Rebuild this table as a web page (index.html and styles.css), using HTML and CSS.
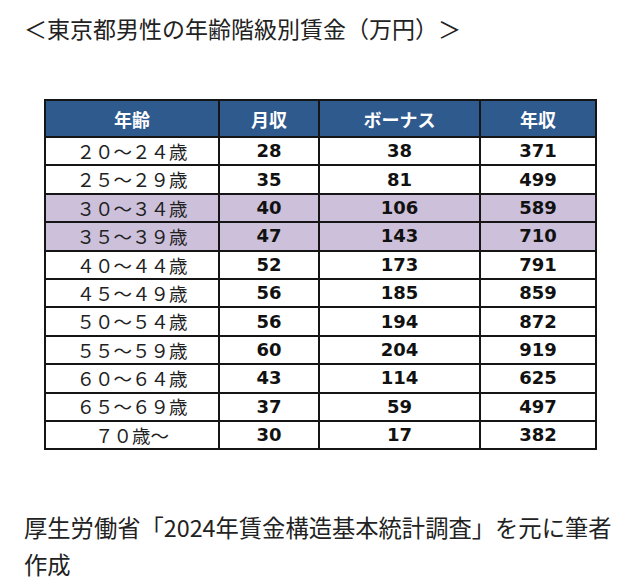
FILE: index.html
```html
<!DOCTYPE html>
<html lang="ja">
<head>
<meta charset="utf-8">
<link rel="stylesheet" href="styles.css">
</head>
<body>
<div class="page">
  <h1 class="title">＜東京都男性の年齢階級別賃金（万円）＞</h1>
  <table class="wage">
    <colgroup>
      <col class="c1"><col class="c2"><col class="c3"><col class="c4">
    </colgroup>
    <thead>
      <tr><th>年齢</th><th>月収</th><th>ボーナス</th><th>年収</th></tr>
    </thead>
    <tbody>
      <tr><td class="age">２０～２４歳</td><td>28</td><td>38</td><td>371</td></tr>
      <tr><td class="age">２５～２９歳</td><td>35</td><td>81</td><td>499</td></tr>
      <tr class="hl"><td class="age">３０～３４歳</td><td>40</td><td>106</td><td>589</td></tr>
      <tr class="hl"><td class="age">３５～３９歳</td><td>47</td><td>143</td><td>710</td></tr>
      <tr><td class="age">４０～４４歳</td><td>52</td><td>173</td><td>791</td></tr>
      <tr><td class="age">４５～４９歳</td><td>56</td><td>185</td><td>859</td></tr>
      <tr><td class="age">５０～５４歳</td><td>56</td><td>194</td><td>872</td></tr>
      <tr><td class="age">５５～５９歳</td><td>60</td><td>204</td><td>919</td></tr>
      <tr><td class="age">６０～６４歳</td><td>43</td><td>114</td><td>625</td></tr>
      <tr><td class="age">６５～６９歳</td><td>37</td><td>59</td><td>497</td></tr>
      <tr><td class="age">７０歳～</td><td>30</td><td>17</td><td>382</td></tr>
    </tbody>
  </table>
  <p class="source">厚生労働省「2024年賃金構造基本統計調査」を元に筆者作成</p>
</div>
</body>
</html>
```

FILE: styles.css
```css
html, body {
  margin: 0;
  padding: 0;
  background: #ffffff;
}

.page {
  padding: 12px 16px 0 24px;
  font-family: "Noto Sans CJK JP", "Noto Sans", sans-serif;
  color: #222222;
}

.title {
  margin: 0;
  font-size: 23px;
  font-weight: 400;
  line-height: 32px;
}

.wage {
  margin: 55px 0 0 20px;
  border-collapse: collapse;
  border: 2px solid #151515;
  width: 551px;
  table-layout: fixed;
}

.c1 { width: 174px; }
.c2 { width: 100px; }
.c3 { width: 161px; }
.c4 { width: 116px; }

.wage th,
.wage td {
  border: 2px solid #151515;
  padding: 0;
  text-align: center;
  vertical-align: middle;
}

.wage th {
  height: 35px;
  background: #2f5a8e;
  color: #ffffff;
  font-family: "Noto Sans CJK JP", sans-serif;
  font-weight: 700;
  font-size: 18px;
}

.wage td {
  height: 26.4px;
  font-family: "DejaVu Sans", "Noto Sans CJK JP", sans-serif;
  font-weight: 700;
  font-size: 18px;
  color: #111111;
  line-height: 1;
}

.wage td.age {
  font-family: "Noto Sans CJK JP", sans-serif;
  font-weight: 400;
  font-size: 18.5px;
  color: #222222;
}

.wage tr.hl td {
  background: #ccc0da;
}

.source {
  width: 600px;
  margin: 59px 0 0 0;
  font-size: 23.3px;
  line-height: 37px;
  font-weight: 400;
  color: #222222;
}
```
